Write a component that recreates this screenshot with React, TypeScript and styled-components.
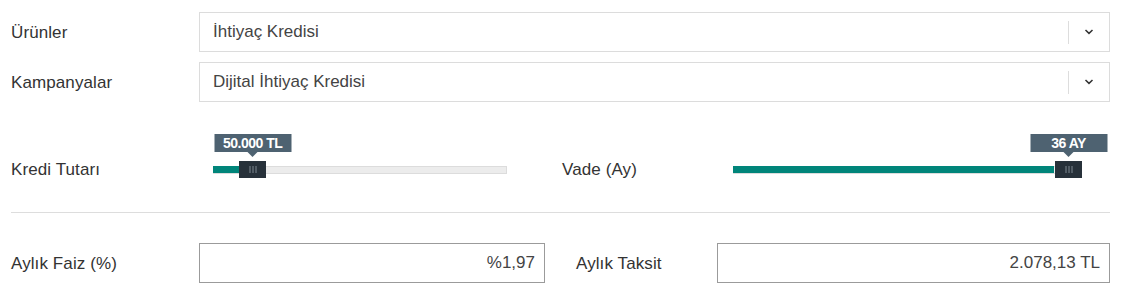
import * as React from "react";
import styled, { createGlobalStyle } from "styled-components";

const GlobalStyle = createGlobalStyle`
  body {
    margin: 0;
    background: #fff;
    font-family: "Liberation Sans", Arial, sans-serif;
    color: #333;
  }
`;

const THUMB = 27;

const Page = styled.div`
  box-sizing: border-box;
  width: 1124px;
  padding: 12px 14px 0 11px;
`;

const FieldRow = styled.div`
  display: grid;
  grid-template-columns: 188px 1fr;
  align-items: center;

  & + & {
    margin-top: 10px;
  }
`;

const Label = styled.div`
  font-size: 17px;
  line-height: 17px;
  color: #333;
  letter-spacing: 0.1px;
`;

const Select = styled.div`
  box-sizing: border-box;
  height: 40px;
  border: 1px solid #dcdcdc;
  display: flex;
  align-items: center;
  padding-left: 13px;
  font-size: 17px;
  color: #444;
`;

const Arrow = styled.div`
  margin-left: auto;
  width: 40px;
  height: 23px;
  border-left: 1px solid #dddddd;
  display: flex;
  align-items: center;
  justify-content: center;
`;

const SliderRow = styled.div`
  display: grid;
  grid-template-columns: 202px 294px 1fr 171px 349px 28px;
  align-items: end;
  margin-top: 32px;
`;

const SliderBox = styled.div`
  position: relative;
  padding-top: 27px;
  height: 17px;
  display: flex;
  align-items: center;
`;

const Track = styled.div`
  position: relative;
  box-sizing: border-box;
  width: 100%;
  height: 8px;
  background: #ececec;
  border: 1px solid #dcdcdc;
`;

const Fill = styled.div`
  position: absolute;
  left: -1px;
  top: -1px;
  bottom: 0;
  background: #00857a;
`;

const Thumb = styled.div`
  position: absolute;
  top: 27px;
  width: ${THUMB}px;
  height: 17px;
  background: #27313a;
  display: flex;
  align-items: center;
  justify-content: center;
`;

const Tip = styled.div`
  position: absolute;
  top: 0;
  box-sizing: border-box;
  width: 77px;
  height: 18px;
  transform: translateX(-50%);
  background: #4e6271;
  color: #fff;
  font-weight: bold;
  font-size: 14px;
  line-height: 18px;
  text-align: center;
  letter-spacing: -0.5px;

  &::after {
    content: "";
    position: absolute;
    left: 50%;
    top: 18px;
    margin-left: -5px;
    border-left: 5px solid transparent;
    border-right: 5px solid transparent;
    border-top: 5px solid #4e6271;
  }
`;

const Divider = styled.hr`
  margin: 34px 0 0;
  border: 0;
  border-top: 1px solid #dddddd;
`;

const ResultRow = styled.div`
  display: grid;
  grid-template-columns: 188px 346px 31px 141px 1fr;
  align-items: center;
  margin-top: 30px;
`;

const Output = styled.div`
  box-sizing: border-box;
  height: 40px;
  border: 1px solid #9b9b9b;
  display: flex;
  align-items: center;
  justify-content: flex-end;
  padding-right: 9px;
  font-size: 17px;
  color: #444;
`;

const Chevron = () => (
  <svg width="10" height="6" viewBox="0 0 10 6">
    <path d="M1.5 1l3.5 3.4 3.5-3.4" fill="none" stroke="#333" strokeWidth="1.5" />
  </svg>
);

const Grip = () => (
  <svg width="8" height="7" viewBox="0 0 8 7">
    <path d="M1 0v7M4 0v7M7 0v7" stroke="#7f8991" strokeWidth="1" />
  </svg>
);

function Slider({ value, min, max, text }: { value: number; min: number; max: number; text: string }) {
  const pct = (value - min) / (max - min);
  const left = `calc((100% - ${THUMB}px) * ${pct})`;
  return (
    <SliderBox>
      <Track>
        <Fill style={{ width: `calc((100% - ${THUMB}px) * ${pct} + 1px)` }} />
      </Track>
      <Thumb style={{ left }}>
        <Grip />
      </Thumb>
      <Tip style={{ left: `calc(${left} + ${THUMB / 2}px)` }}>{text}</Tip>
    </SliderBox>
  );
}

export default function App() {
  return (
    <Page>
      <GlobalStyle />
      <FieldRow>
        <Label>Ürünler</Label>
        <Select>
          İhtiyaç Kredisi
          <Arrow><Chevron /></Arrow>
        </Select>
      </FieldRow>
      <FieldRow>
        <Label>Kampanyalar</Label>
        <Select>
          Dijital İhtiyaç Kredisi
          <Arrow><Chevron /></Arrow>
        </Select>
      </FieldRow>

      <SliderRow>
        <Label>Kredi Tutarı</Label>
        <Slider value={50000} min={1000} max={500000} text="50.000 TL" />
        <div />
        <Label>Vade (Ay)</Label>
        <Slider value={36} min={3} max={36} text="36 AY" />
        <div />
      </SliderRow>

      <Divider />

      <ResultRow>
        <Label>Aylık Faiz (%)</Label>
        <Output>%1,97</Output>
        <div />
        <Label>Aylık Taksit</Label>
        <Output>2.078,13 TL</Output>
      </ResultRow>
    </Page>
  );
}
